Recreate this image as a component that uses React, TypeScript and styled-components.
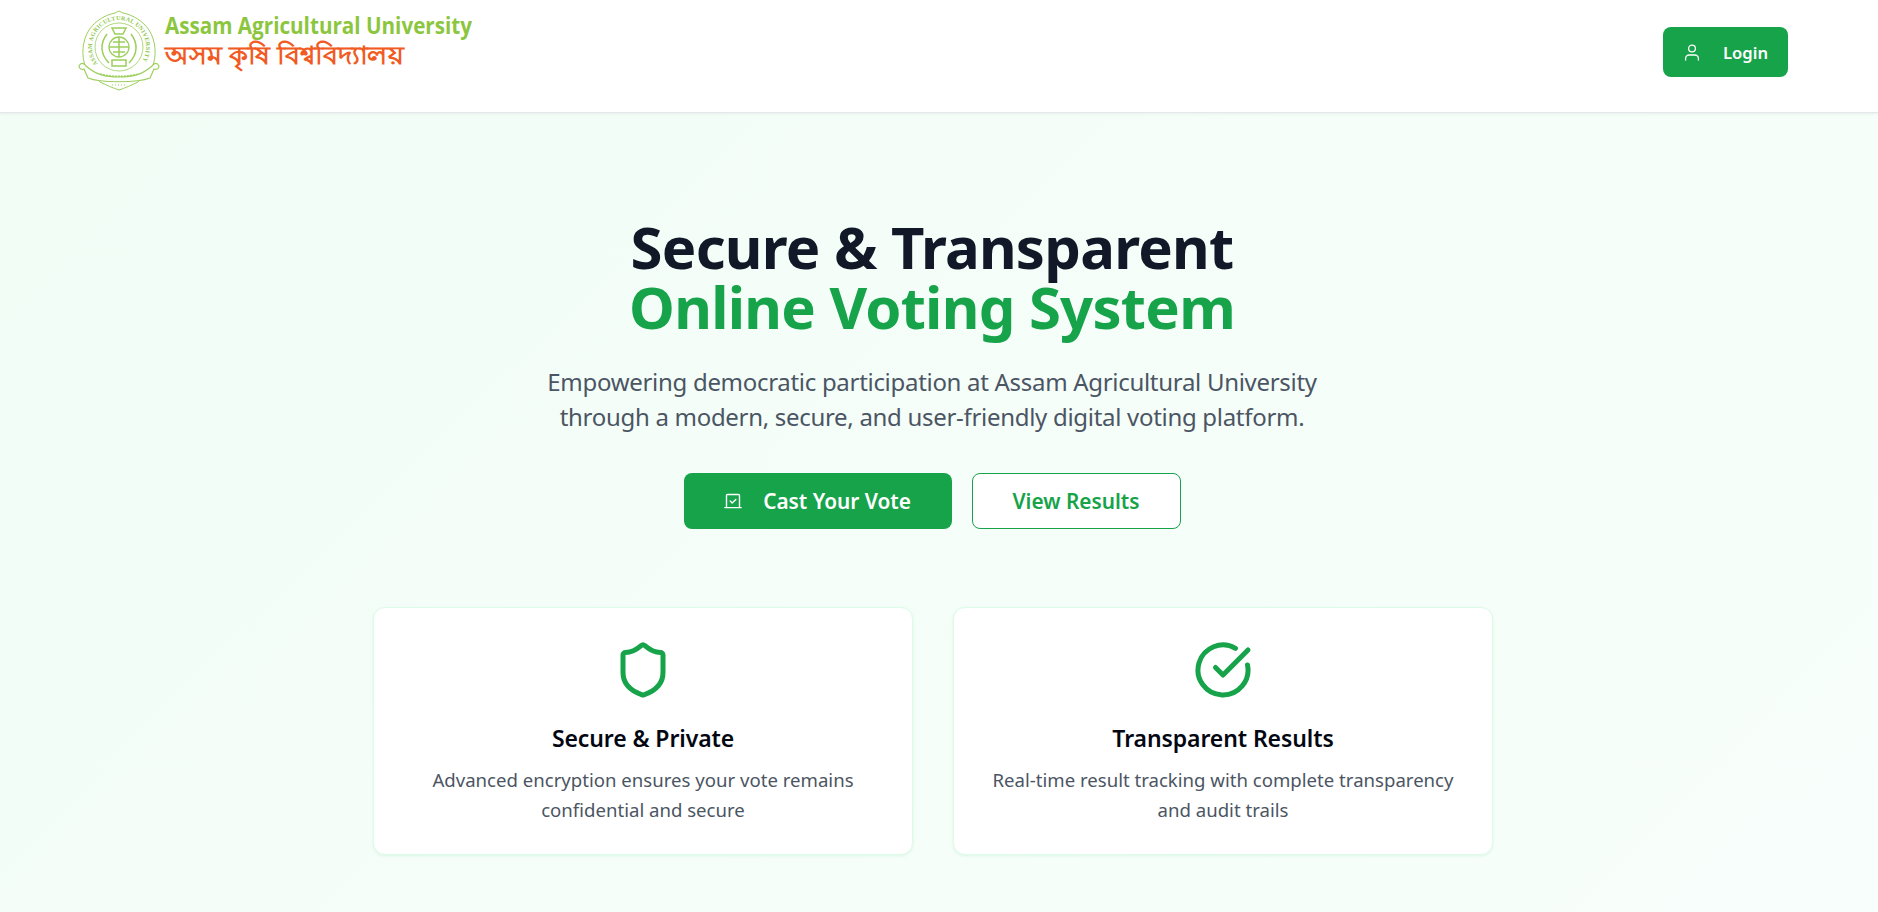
import React from "react";
import styled, { createGlobalStyle } from "styled-components";

const Global = createGlobalStyle`
  html, body { margin: 0; padding: 0; }
  body { font-family: "Noto Sans", "Open Sans", sans-serif; background: #f4fdf8; width: 1878px; height: 912px; overflow: hidden; }
  * { box-sizing: border-box; }
`;

const Page = styled.div`
  width: 1878px;
  height: 912px;
  background: linear-gradient(135deg, #f2fdf6 0%, #f7fefb 100%);
`;
const Header = styled.header`
  height: 113px;
  background: #fff;
  border-bottom: 1px solid #e5e7eb;
  box-shadow: 0 1px 3px rgba(0, 0, 0, 0.06);
  padding: 0 90px 0 78px;
  display: flex;
  justify-content: space-between;
  align-items: flex-start;
`;
const LogoWrap = styled.div`
  display: flex;
  margin-top: 10px;
`;
const LoginButton = styled.button`
  margin-top: 27px;
  width: 125px;
  height: 50px;
  padding: 1px 0 0 1px;
  border: 0;
  border-radius: 8px;
  background: #16a34a;
  color: #fff;
  font: 600 16.6px "Noto Sans", sans-serif;
  display: flex;
  align-items: center;
  justify-content: center;
  gap: 23px;
`;
const Hero = styled.main`
  display: flex;
  flex-direction: column;
  align-items: center;
  padding: 104px 14px 0 0;
`;
const Title = styled.h1`
  margin: 0;
  font-size: 58px;
  line-height: 60px;
  font-weight: 700;
  letter-spacing: -0.75px;
  color: #111827;
  text-align: center;
`;
const Accent = styled.span`
  display: block;
  color: #16a34a;
`;
const Lead = styled.p`
  margin: 27px 0 0;
  font-size: 24px;
  line-height: 35px;
  letter-spacing: -0.3px;
  color: #4b5563;
  text-align: center;
  width: 800px;
`;
const Actions = styled.div`
  display: flex;
  gap: 20px;
  margin-top: 39px;
`;
const Button = styled.button<{ $primary?: boolean }>`
  height: 56px;
  border-radius: 8px;
  font: 600 20.8px "Noto Sans", sans-serif;
  display: flex;
  align-items: center;
  justify-content: center;
  gap: 21px;
  width: ${(p) => (p.$primary ? "268px" : "209px")};
  background: ${(p) => (p.$primary ? "#16a34a" : "#fff")};
  color: ${(p) => (p.$primary ? "#fff" : "#16a34a")};
  border: ${(p) => (p.$primary ? "0" : "1px solid #16a34a")};
`;
const Cards = styled.section`
  display: grid;
  grid-template-columns: 540px 540px;
  gap: 40px;
  margin: 78px 0 0 2px;
`;
const Card = styled.article`
  height: 248px;
  background: #fff;
  border: 1px solid #dcfce7;
  border-radius: 12px;
  box-shadow: 0 1px 3px rgba(22, 163, 74, 0.1);
  padding: 32px 16px 0;
  display: flex;
  flex-direction: column;
  align-items: center;
  text-align: center;
`;
const CardTitle = styled.h3`
  margin: 23px 0 0;
  font-size: 23px;
  line-height: 30px;
  font-weight: 600;
  letter-spacing: -0.1px;
  color: #030712;
`;
const CardText = styled.p`
  margin: 12px 0 0;
  font-size: 18.6px;
  line-height: 30px;
  color: #4b5563;
`;

const Logo = () => (
  <svg width="420" height="84" viewBox="0 0 420 84" role="img">
    <defs>
      <path id="ring" d="M20 54 A27 27 0 1 1 62 54" />
    </defs>
    <g fill="none" stroke="#9ccf5c" strokeWidth="1">
      <path d="M41 1 L45 3 C55 5 65 11 71 20 C78 31 79 46 74 58 L60 72 C54 75 47 78 41 80 C35 78 28 75 22 72 L8 58 C3 46 4 31 11 20 C17 11 27 5 37 3Z" />
      <circle cx="41" cy="37" r="24" strokeWidth="0.8" />
      <circle cx="41" cy="37" r="10" strokeWidth="1.3" />
      <path d="M31 37h20M41 27v20M35 32h12M35 42h12M34 50h14v6H34zM29 24c-7 9-7 20 2 29M53 24c7 9 7 20-2 29M34 18h14l-3 6h-8z" strokeWidth="1.5" />
      <path d="M1 56 C3 52 6 53 8 56 C18 65 28 67 41 67 C54 67 64 65 74 56 C76 53 79 52 81 56 C81 59 78 60 76 59 L72 68 C60 73 22 73 10 68 L6 59 C4 60 1 59 1 56Z" fill="#fff" strokeWidth="1.2" />
      <path d="M22 64c12 3 26 3 38 0" strokeWidth="1.4" strokeDasharray="2 1" />
      <path d="M34 75h14" strokeWidth="1" strokeDasharray="1 2" />
    </g>
    <text fill="#8fc84a" fontFamily="Liberation Serif, serif" fontWeight="700" fontSize="6">
      <textPath href="#ring" textLength="117" lengthAdjust="spacing">ASSAM AGRICULTURAL UNIVERSITY</textPath>
    </text>
    <text x="87" y="24" fill="#8cc63f" fontFamily="Open Sans, sans-serif" fontWeight="700" fontSize="24" textLength="307" lengthAdjust="spacingAndGlyphs">Assam Agricultural University</text>
    <text x="87" y="54" fill="#f15a22" fontFamily="Noto Sans, sans-serif" fontWeight="700" fontSize="25" textLength="239" lengthAdjust="spacingAndGlyphs">অসম কৃষি বিশ্ববিদ্যালয়</text>
  </svg>
);

const UserIcon = () => (
  <svg width="16" height="17" viewBox="0 0 16 17" fill="none" stroke="#fff" strokeWidth="1.3" strokeLinecap="round">
    <circle cx="8" cy="4.5" r="3.4" />
    <path d="M1.6 16v-1.5A3.5 3.5 0 0 1 5.1 11h5.8a3.5 3.5 0 0 1 3.5 3.5V16" />
  </svg>
);
const VoteIcon = () => (
  <svg width="18" height="16" viewBox="0 0 18 16" fill="none" stroke="#fff" strokeWidth="1.4" strokeLinecap="round" strokeLinejoin="round">
    <path d="M2.5 14V2.5a1 1 0 0 1 1-1h11a1 1 0 0 1 1 1V14M.8 14.6h16.4" />
    <path d="M6.2 8l2 2 3.6-3.6" />
  </svg>
);
const ShieldIcon = () => (
  <svg width="60" height="60" viewBox="0 0 24 24" fill="none" stroke="#16a34a" strokeWidth="2" strokeLinecap="round" strokeLinejoin="round">
    <path d="M20 13c0 5-3.5 7.5-7.66 8.95a1 1 0 0 1-.67-.01C7.5 20.5 4 18 4 13V6a1 1 0 0 1 1-1c2 0 4.5-1.2 6.24-2.72a1.17 1.17 0 0 1 1.52 0C14.51 3.81 17 5 19 5a1 1 0 0 1 1 1z" />
  </svg>
);
const CheckIcon = () => (
  <svg width="60" height="60" viewBox="0 0 24 24" fill="none" stroke="#16a34a" strokeWidth="2" strokeLinecap="round" strokeLinejoin="round">
    <path d="M21.8 10A10 10 0 1 1 17 3.33" />
    <path d="m9 11 3 3L22 4" />
  </svg>
);

export default function App() {
  return (
    <Page>
      <Global />
      <Header>
        <LogoWrap><Logo /></LogoWrap>
        <LoginButton><UserIcon />Login</LoginButton>
      </Header>
      <Hero>
        <Title>Secure &amp; Transparent<Accent>Online Voting System</Accent></Title>
        <Lead>Empowering democratic participation at Assam Agricultural University through a modern, secure, and user-friendly digital voting platform.</Lead>
        <Actions>
          <Button $primary><VoteIcon />Cast Your Vote</Button>
          <Button>View Results</Button>
        </Actions>
        <Cards>
          <Card>
            <ShieldIcon />
            <CardTitle>Secure &amp; Private</CardTitle>
            <CardText>Advanced encryption ensures your vote remains<br />confidential and secure</CardText>
          </Card>
          <Card>
            <CheckIcon />
            <CardTitle>Transparent Results</CardTitle>
            <CardText>Real-time result tracking with complete transparency<br />and audit trails</CardText>
          </Card>
        </Cards>
      </Hero>
    </Page>
  );
}
